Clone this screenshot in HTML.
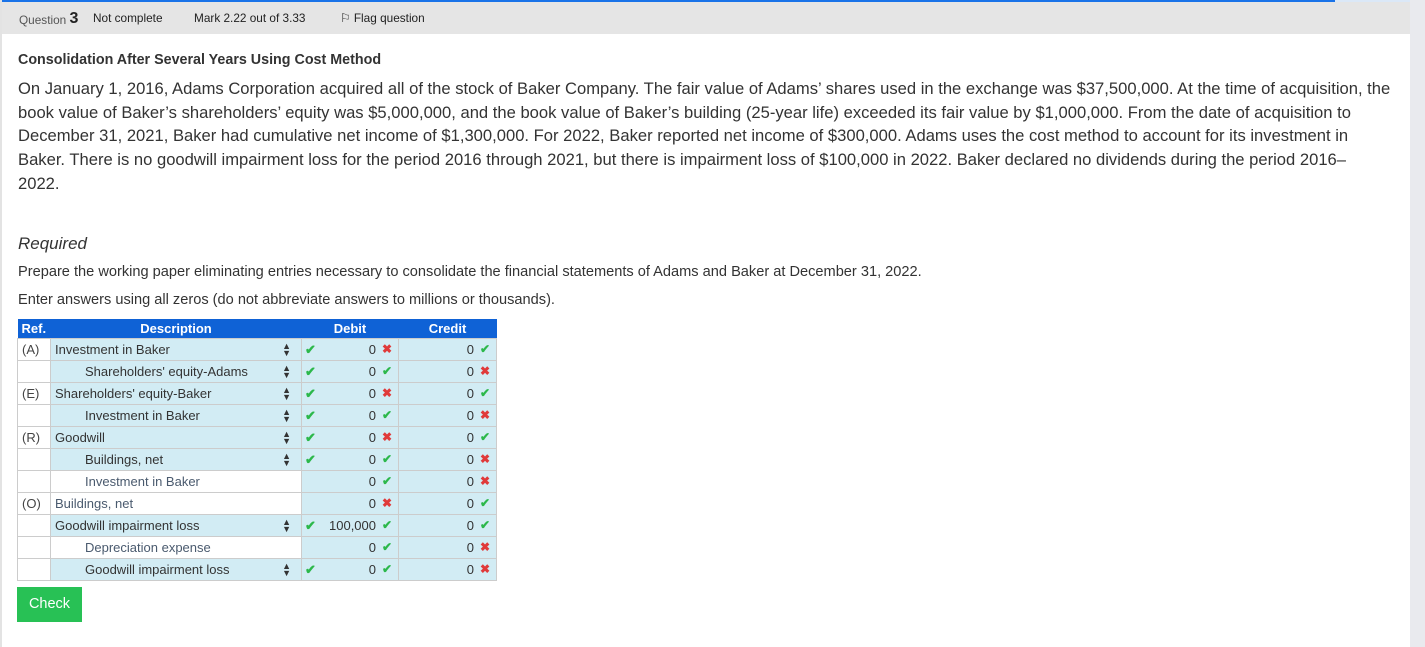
<!DOCTYPE html>
<html><head><style>
body{margin:0;width:1425px;height:647px;background:#fff;font-family:"Liberation Sans",sans-serif;color:#333;position:relative;overflow:hidden}
.rs{position:absolute;left:1410px;top:0;width:15px;height:647px;background:#e9eaee}
.lb{position:absolute;left:0;top:0;width:2px;height:647px;background:#e3e3e3}
.top{position:absolute;left:0;top:0;width:1410px;height:2px;background:#dbe8f7}
.top i{position:absolute;left:0;top:0;width:1335px;height:2px;background:#1a73e8}
.hdr{position:absolute;left:2px;top:2px;width:1408px;height:32px;background:#e5e5e5;font-size:11.8px;color:#222}
.hdr span{position:absolute;top:9px}
h3{position:absolute;left:18px;top:52px;margin:0;font-size:14.3px;font-weight:bold;color:#333}
.p{position:absolute;left:18px;top:77px;width:1390px;font-size:16.6px;line-height:23.7px;color:#333;white-space:nowrap}
.req{position:absolute;left:18px;top:234px;font-size:17px;font-style:italic;color:#333}
.t1{position:absolute;left:18px;top:264px;font-size:14.6px}
.t2{position:absolute;left:18px;top:292px;font-size:14.6px}
table{position:absolute;left:17px;top:319px;border-collapse:collapse;font-size:13px;table-layout:fixed;width:479px}
th{background:#0f62d6;color:#fff;height:19px;padding:0;font-size:13px}
td{height:21px;border:1px solid #ccc;padding:0;position:relative;white-space:nowrap}
.b{background:#d2ecf4}
.ref{padding-left:4px;color:#444}
.d{padding-left:4px}
.d.i{padding-left:34px}
.g{color:#4a5a6e}
.ar{position:absolute;right:10px;top:4px;font-size:9px;line-height:7px;color:#333}
.num{text-align:right}
.num b{font-weight:normal;margin-right:22px}
.ok,.x{position:absolute;right:6px;top:3px;font-size:12px;font-weight:bold}
.ok{color:#2cb84b}.x{color:#e03a3a}
.lc{position:absolute;left:3px;top:3px;color:#2cb84b;font-weight:bold}
.btn{position:absolute;left:17px;top:587px;width:65px;height:35px;background:#28c155;color:#fff;font-size:14.5px;text-align:center;line-height:35px}
</style></head><body>
<div class="top"><i></i></div>
<div class="hdr"><span style="left:17px;color:#555">Question <b style="font-size:16px;top:-1px;position:relative;color:#222">3</b></span><span style="left:91px">Not complete</span><span style="left:192px">Mark 2.22 out of 3.33</span><span style="left:338px">⚐ Flag question</span></div>
<div class="lb"></div><div class="rs"></div>
<h3>Consolidation After Several Years Using Cost Method</h3>
<div class="p">On January 1, 2016, Adams Corporation acquired all of the stock of Baker Company. The fair value of Adams’ shares used in the exchange was $37,500,000. At the time of acquisition, the<br>book value of Baker’s shareholders’ equity was $5,000,000, and the book value of Baker’s building (25-year life) exceeded its fair value by $1,000,000. From the date of acquisition to<br>December 31, 2021, Baker had cumulative net income of $1,300,000. For 2022, Baker reported net income of $300,000. Adams uses the cost method to account for its investment in<br>Baker. There is no goodwill impairment loss for the period 2016 through 2021, but there is impairment loss of $100,000 in 2022. Baker declared no dividends during the period 2016–<br>2022.</div>
<div class="req">Required</div>
<div class="t1">Prepare the working paper eliminating entries necessary to consolidate the financial statements of Adams and Baker at December 31, 2022.</div>
<div class="t2">Enter answers using all zeros (do not abbreviate answers to millions or thousands).</div>
<table>
<colgroup><col style="width:33px"><col style="width:251px"><col style="width:97px"><col style="width:98px"></colgroup>
<tr><th style="text-align:left;padding-left:4px">Ref.</th><th>Description</th><th>Debit</th><th>Credit</th></tr>
<tr><td class="ref">(A)</td><td class="d b">Investment in Baker<span class="ar">▲<br>▼</span></td><td class="num b"><span class="lc">✔</span><b>0</b><span class="x">✖</span></td><td class="num b"><b>0</b><span class="ok">✔</span></td></tr>
<tr><td class="ref"></td><td class="d i b">Shareholders' equity-Adams<span class="ar">▲<br>▼</span></td><td class="num b"><span class="lc">✔</span><b>0</b><span class="ok">✔</span></td><td class="num b"><b>0</b><span class="x">✖</span></td></tr>
<tr><td class="ref">(E)</td><td class="d b">Shareholders' equity-Baker<span class="ar">▲<br>▼</span></td><td class="num b"><span class="lc">✔</span><b>0</b><span class="x">✖</span></td><td class="num b"><b>0</b><span class="ok">✔</span></td></tr>
<tr><td class="ref"></td><td class="d i b">Investment in Baker<span class="ar">▲<br>▼</span></td><td class="num b"><span class="lc">✔</span><b>0</b><span class="ok">✔</span></td><td class="num b"><b>0</b><span class="x">✖</span></td></tr>
<tr><td class="ref">(R)</td><td class="d b">Goodwill<span class="ar">▲<br>▼</span></td><td class="num b"><span class="lc">✔</span><b>0</b><span class="x">✖</span></td><td class="num b"><b>0</b><span class="ok">✔</span></td></tr>
<tr><td class="ref"></td><td class="d i b">Buildings, net<span class="ar">▲<br>▼</span></td><td class="num b"><span class="lc">✔</span><b>0</b><span class="ok">✔</span></td><td class="num b"><b>0</b><span class="x">✖</span></td></tr>
<tr><td class="ref"></td><td class="d i g">Investment in Baker</td><td class="num b"><b>0</b><span class="ok">✔</span></td><td class="num b"><b>0</b><span class="x">✖</span></td></tr>
<tr><td class="ref">(O)</td><td class="d g">Buildings, net</td><td class="num b"><b>0</b><span class="x">✖</span></td><td class="num b"><b>0</b><span class="ok">✔</span></td></tr>
<tr><td class="ref"></td><td class="d b">Goodwill impairment loss<span class="ar">▲<br>▼</span></td><td class="num b"><span class="lc">✔</span><b>100,000</b><span class="ok">✔</span></td><td class="num b"><b>0</b><span class="ok">✔</span></td></tr>
<tr><td class="ref"></td><td class="d i g">Depreciation expense</td><td class="num b"><b>0</b><span class="ok">✔</span></td><td class="num b"><b>0</b><span class="x">✖</span></td></tr>
<tr><td class="ref"></td><td class="d i b">Goodwill impairment loss<span class="ar">▲<br>▼</span></td><td class="num b"><span class="lc">✔</span><b>0</b><span class="ok">✔</span></td><td class="num b"><b>0</b><span class="x">✖</span></td></tr>
</table>
<div class="btn">Check</div>
</body></html>
